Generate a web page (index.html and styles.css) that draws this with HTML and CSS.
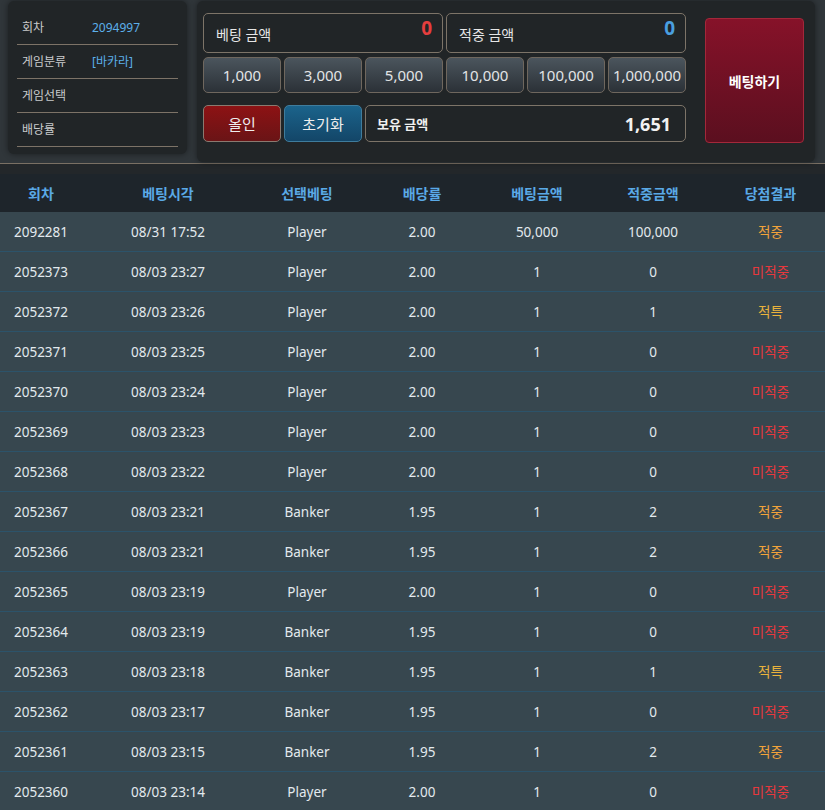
FILE: index.html
```html
<!DOCTYPE html>
<html lang="ko">
<head>
<meta charset="utf-8">
<title>베팅</title>
<link rel="stylesheet" href="styles.css">
</head>
<body>
<div class="top">
  <div class="info">
    <div class="info-row"><span class="lbl">회차</span><span class="val">2094997</span></div>
    <div class="info-row"><span class="lbl">게임분류</span><span class="val">[바카라]</span></div>
    <div class="info-row"><span class="lbl">게임선택</span><span class="val"></span></div>
    <div class="info-row"><span class="lbl">배당률</span><span class="val"></span></div>
  </div>
  <div class="bet">
    <div class="bet-grid">
      <div class="box amount"><span class="box-lbl">베팅 금액</span><span class="num red">0</span></div>
      <div class="box amount"><span class="box-lbl">적중 금액</span><span class="num blue">0</span></div>
      <button class="chip">1,000</button>
      <button class="chip">3,000</button>
      <button class="chip">5,000</button>
      <button class="chip">10,000</button>
      <button class="chip">100,000</button>
      <button class="chip">1,000,000</button>
      <button class="act allin">올인</button>
      <button class="act reset">초기화</button>
      <div class="box balance"><span class="bal-lbl">보유 금액</span><span class="bal-num">1,651</span></div>
    </div>
    <button class="go">베팅하기</button>
  </div>
</div>
<div class="strip"></div>
<div class="tbl">
  <div class="tr th"><span>회차</span><span>베팅시각</span><span>선택베팅</span><span>배당률</span><span>베팅금액</span><span>적중금액</span><span>당첨결과</span></div>
  <div class="tr"><span>2092281</span><span>08/31 17:52</span><span>Player</span><span>2.00</span><span>50,000</span><span>100,000</span><span class="win">적중</span></div>
  <div class="tr"><span>2052373</span><span>08/03 23:27</span><span>Player</span><span>2.00</span><span>1</span><span>0</span><span class="lose">미적중</span></div>
  <div class="tr"><span>2052372</span><span>08/03 23:26</span><span>Player</span><span>2.00</span><span>1</span><span>1</span><span class="tie">적특</span></div>
  <div class="tr"><span>2052371</span><span>08/03 23:25</span><span>Player</span><span>2.00</span><span>1</span><span>0</span><span class="lose">미적중</span></div>
  <div class="tr"><span>2052370</span><span>08/03 23:24</span><span>Player</span><span>2.00</span><span>1</span><span>0</span><span class="lose">미적중</span></div>
  <div class="tr"><span>2052369</span><span>08/03 23:23</span><span>Player</span><span>2.00</span><span>1</span><span>0</span><span class="lose">미적중</span></div>
  <div class="tr"><span>2052368</span><span>08/03 23:22</span><span>Player</span><span>2.00</span><span>1</span><span>0</span><span class="lose">미적중</span></div>
  <div class="tr"><span>2052367</span><span>08/03 23:21</span><span>Banker</span><span>1.95</span><span>1</span><span>2</span><span class="win">적중</span></div>
  <div class="tr"><span>2052366</span><span>08/03 23:21</span><span>Banker</span><span>1.95</span><span>1</span><span>2</span><span class="win">적중</span></div>
  <div class="tr"><span>2052365</span><span>08/03 23:19</span><span>Player</span><span>2.00</span><span>1</span><span>0</span><span class="lose">미적중</span></div>
  <div class="tr"><span>2052364</span><span>08/03 23:19</span><span>Banker</span><span>1.95</span><span>1</span><span>0</span><span class="lose">미적중</span></div>
  <div class="tr"><span>2052363</span><span>08/03 23:18</span><span>Banker</span><span>1.95</span><span>1</span><span>1</span><span class="tie">적특</span></div>
  <div class="tr"><span>2052362</span><span>08/03 23:17</span><span>Banker</span><span>1.95</span><span>1</span><span>0</span><span class="lose">미적중</span></div>
  <div class="tr"><span>2052361</span><span>08/03 23:15</span><span>Banker</span><span>1.95</span><span>1</span><span>2</span><span class="win">적중</span></div>
  <div class="tr"><span>2052360</span><span>08/03 23:14</span><span>Player</span><span>2.00</span><span>1</span><span>0</span><span class="lose">미적중</span></div>
</div>
</body>
</html>
```

FILE: styles.css
```css
* { box-sizing: border-box; }
html, body {
  margin: 0;
  padding: 0;
  background: #37474f;
  font-family: "Noto Sans", "Noto Sans CJK KR", sans-serif;
  color: #e3e9ed;
}
button {
  font-family: inherit;
  margin: 0;
  cursor: pointer;
}

.top {
  height: 164px;
  display: flex;
  align-items: flex-start;
  gap: 10px;
  padding: 1px 10px 0 8px;
  background: #30363a;
  border-bottom: 1px solid #7a7064;
}

.info {
  width: 179px;
  height: 153px;
  background: #212527;
  border-radius: 6px;
  box-shadow: 0 0 6px rgba(0, 0, 0, 0.45);
  padding: 10px 9px 0;
}
.info-row {
  height: 34px;
  display: flex;
  align-items: center;
  border-bottom: 1px solid #7d7367;
  padding-left: 5px;
  font-size: 12px;
  line-height: 16px;
}
.lbl { width: 70px; color: #c9cbcc; }
.val { color: #5cb0ea; }

.bet {
  width: 618px;
  height: 161px;
  background: #212527;
  border-radius: 6px;
  box-shadow: 0 0 6px rgba(0, 0, 0, 0.45);
  padding: 12px 11px 0 6px;
  display: flex;
  align-items: flex-start;
  gap: 19px;
}
.bet-grid {
  width: 483px;
  display: grid;
  grid-template-columns: repeat(6, 78px);
  grid-template-rows: 40px 36px 45px;
  column-gap: 3px;
  row-gap: 4px;
}
.box {
  border: 1px solid #7d7468;
  border-radius: 5px;
  background: #212527;
  display: flex;
  align-items: center;
  justify-content: space-between;
}
.amount {
  grid-column: span 3;
  padding: 0 10px 0 12px;
}
.box-lbl {
  font-size: 14px;
  color: #e6e6e6;
  padding-top: 2px;
}
.num {
  font-size: 19px;
  font-weight: 700;
  line-height: 22px;
  margin-bottom: 10px;
}
.red { color: #e53e3e; }
.blue { color: #4a9fe0; }

.chip {
  border: 1px solid #6f675e;
  border-radius: 5px;
  background: linear-gradient(#4b555d, #2b3137);
  color: #e2e4e6;
  font-size: 15px;
  padding: 0;
}
.act {
  align-self: end;
  height: 37px;
  border-radius: 5px;
  font-size: 15px;
  color: #eeeeee;
  padding: 0;
}
.allin {
  border: 1px solid #8a7a70;
  background: linear-gradient(#8d1214, #6a1416);
}
.reset {
  border: 1px solid #3f7c9c;
  background: linear-gradient(#1b638b, #134668);
}
.balance {
  grid-column: span 4;
  align-self: end;
  height: 37px;
  padding: 0 14px 0 11px;
}
.bal-lbl {
  font-size: 13px;
  font-weight: 700;
  color: #f0f0f0;
}
.bal-num {
  font-size: 18px;
  font-weight: 700;
  color: #f2f2f2;
}

.go {
  width: 99px;
  height: 125px;
  margin-top: 5px;
  border: 1px solid #a3283a;
  border-radius: 4px;
  background: linear-gradient(#861229, #5b0f1f);
  color: #ffffff;
  font-size: 14px;
  font-weight: 700;
  padding: 0;
}

.strip {
  height: 10px;
  background: #23272a;
}

.tr {
  display: grid;
  grid-template-columns: 82px 172px 106px 124px 106px 126px 109px;
  height: 40px;
  align-items: center;
  text-align: center;
  border-bottom: 1px solid #2c536a;
  background: #37474f;
  font-size: 13.5px;
  line-height: 18px;
  color: #e3eaee;
  padding-top: 1px;
}
.tr.th {
  height: 38px;
  background: #1e252b;
  border-bottom: none;
  font-size: 14px;
  font-weight: 700;
  color: #5aa9e6;
}
.win { color: #f1a33a; }
.tie { color: #e9b33c; }
.lose { color: #e8383d; }
```
